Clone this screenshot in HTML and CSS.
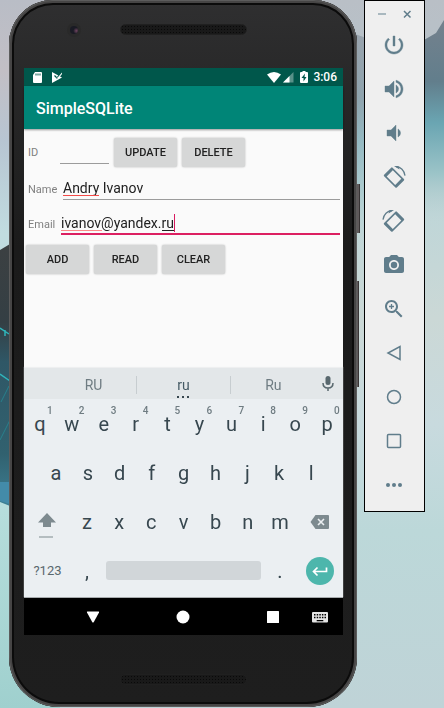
FILE: index.html
```html
<!DOCTYPE html>
<html lang="en">
<head>
<meta charset="utf-8">
<meta name="viewport" content="width=device-width, initial-scale=1">
<title>SimpleSQLite</title>
<link rel="stylesheet" href="styles.css">
</head>
<body>
<svg class="wallpaper" viewBox="0 0 444 708" preserveAspectRatio="none" aria-hidden="true">
  <defs>
    <linearGradient id="sky" x1="0" y1="0" x2="0" y2="1">
      <stop offset="0" stop-color="#b9bfc6"/><stop offset=".14" stop-color="#b5c3ca"/>
      <stop offset=".3" stop-color="#bfd6d8"/><stop offset=".45" stop-color="#cbd8d6"/>
      <stop offset=".6" stop-color="#c8dade"/><stop offset=".75" stop-color="#bcd8d9"/>
      <stop offset="1" stop-color="#bfd3d7"/>
    </linearGradient>
    <linearGradient id="ridge" x1="0" y1="0" x2="0" y2="1">
      <stop offset="0" stop-color="#74818d"/><stop offset=".3" stop-color="#627e8c"/>
      <stop offset=".5" stop-color="#6aa5b2"/><stop offset=".75" stop-color="#9cc4c8"/>
      <stop offset="1" stop-color="#c3d5d5" stop-opacity="0"/>
    </linearGradient>
    <linearGradient id="left" x1="0" y1="0" x2="0" y2="1">
      <stop offset="0" stop-color="#b9bdc6"/><stop offset=".1" stop-color="#c2bfc5"/>
      <stop offset=".2" stop-color="#b7c5d2"/><stop offset=".33" stop-color="#c1dce0"/>
      <stop offset=".7" stop-color="#b8dedd"/><stop offset="1" stop-color="#9fd0ce"/>
    </linearGradient>
    <linearGradient id="rock" x1="0" y1="0" x2="0" y2="1">
      <stop offset="0" stop-color="#3c4042"/><stop offset=".3" stop-color="#343f44"/>
      <stop offset=".45" stop-color="#2f5766"/><stop offset=".8" stop-color="#31616f"/>
      <stop offset="1" stop-color="#3d8095"/>
    </linearGradient>
  </defs>
  <rect width="444" height="708" fill="url(#sky)"/>
  <rect width="60" height="708" fill="url(#left)"/>
  <path d="M0 250 10 244V506L0 502z" fill="url(#rock)"/>
  <path d="M0 328 9 334M0 374 10 381M5 330v6" stroke="#2fb5bb" stroke-width="1.500"/>
  <path d="M1 402 9 386M0 440 10 420" stroke="#28808c"/>
  <path d="M0 482H10V504L0 501z" fill="#438ba9"/>
  <path d="M350 32 366 38V250H350z" fill="url(#ridge)" opacity=".45"/>
  <path d="M424 40 436 33 444 20V225H424z" fill="url(#ridge)"/>
</svg>

<main class="desktop">
  <section class="phone" aria-label="Phone">
    <span class="side-button side-button-power"></span>
    <span class="side-button side-button-volume"></span>
    <div class="bezel bezel-top">
      <span class="camera"></span>
      <span class="speaker"></span>
    </div>

    <div class="screen">
      <div class="status-bar">
        <svg class="status-icon" viewBox="0 0 12 12"><path fill-rule="evenodd" d="M4 1h6q1 0 1 1v9q0 1-1 1H3q-1 0-1-1V4zM4.500 2.500v2h1v-2zm2 0v2h1v-2zm2 0v2h1v-2z"/></svg>
        <svg class="status-icon" viewBox="0 0 12 12"><path d="M1 1 11 6.500 1 12z"/><path d="M3.500 4.500 6 7l4.500-5.500" fill="none" stroke="#00574b" stroke-width="1.200"/><path d="m5 5.500 1.500 1.200L11 1.500 11 3 7 8z" fill="#fff"/></svg>
        <span class="spacer"></span>
        <svg class="wifi" viewBox="0 0 14 12"><path d="M0 3.500Q7-1.500 14 3.500L7 12z"/></svg>
        <svg class="status-icon" viewBox="0 0 12 12"><path d="M11.500 1v10.500H1z" opacity=".35"/><path d="M7.500 5v6.500H1z"/></svg>
        <svg class="battery" viewBox="0 0 8 12"><path fill-rule="evenodd" d="M2.500 0h3v1H7q1 0 1 1v9q0 1-1 1H1q-1 0-1-1V2q0-1 1-1h1.500zM5 2.500 1.500 7h2v3.500L6.500 6h-2z"/></svg>
        <time class="clock">3:06</time>
      </div>
      <header class="app-bar"><h1 class="app-title">SimpleSQLite</h1></header>

      <form class="form">
        <div class="row row-id">
          <label class="label label-id" for="id">ID</label>
          <input class="input input-id" id="id" type="text">
          <button class="action" type="button">UPDATE</button>
          <button class="action" type="button">DELETE</button>
        </div>
        <div class="row row-name">
          <label class="label label-name" for="name">Name</label>
          <div class="field">
            <input class="input" id="name" type="text" value="Andry Ivanov" spellcheck="false">
            <span class="mark mark-name"></span>
          </div>
        </div>
        <div class="row">
          <label class="label label-email" for="email">Email</label>
          <div class="field">
            <input class="input input-active" id="email" type="text" value="ivanov@yandex.ru" spellcheck="false">
            <span class="mark mark-email"></span>
            <span class="mark mark-typing"></span>
            <span class="caret"></span>
          </div>
        </div>
        <div class="row row-actions">
          <button class="action" type="button">ADD</button>
          <button class="action" type="button">READ</button>
          <button class="action" type="button">CLEAR</button>
        </div>
      </form>

      <div class="keyboard">
        <div class="suggestions">
          <button class="suggestion" type="button">RU</button>
          <button class="suggestion suggestion-main" type="button">ru<span class="more"></span></button>
          <button class="suggestion" type="button">Ru</button>
          <button class="mic" type="button" aria-label="Voice input"><svg viewBox="0 0 16 18"><rect x="5.500" y="1" width="5" height="9" rx="2.500"/><path d="M3 8q0 5 5 5t5-5M8 13v3" fill="none" stroke="#59686e" stroke-width="1.500"/></svg></button>
        </div>
        <div class="keys">
          <button class="key" type="button">q<span class="digit">1</span></button>
          <button class="key" type="button">w<span class="digit">2</span></button>
          <button class="key" type="button">e<span class="digit">3</span></button>
          <button class="key" type="button">r<span class="digit">4</span></button>
          <button class="key" type="button">t<span class="digit">5</span></button>
          <button class="key" type="button">y<span class="digit">6</span></button>
          <button class="key" type="button">u<span class="digit">7</span></button>
          <button class="key" type="button">i<span class="digit">8</span></button>
          <button class="key" type="button">o<span class="digit">9</span></button>
          <button class="key" type="button">p<span class="digit">0</span></button>
        </div>
        <div class="keys keys-home">
          <button class="key" type="button">a</button>
          <button class="key" type="button">s</button>
          <button class="key" type="button">d</button>
          <button class="key" type="button">f</button>
          <button class="key" type="button">g</button>
          <button class="key" type="button">h</button>
          <button class="key" type="button">j</button>
          <button class="key" type="button">k</button>
          <button class="key" type="button">l</button>
        </div>
        <div class="keys">
          <button class="key key-wide" type="button" aria-label="Shift"><svg class="shift-icon" viewBox="0 0 20 26"><path d="M9 0 18 9.500H13V14H5V9.500H0z"/><path d="M1 23.500h14v1H1z"/></svg></button>
          <button class="key" type="button">z</button>
          <button class="key" type="button">x</button>
          <button class="key" type="button">c</button>
          <button class="key" type="button">v</button>
          <button class="key" type="button">b</button>
          <button class="key" type="button">n</button>
          <button class="key" type="button">m</button>
          <button class="key key-wide" type="button" aria-label="Backspace"><svg class="delete-icon" viewBox="0 0 20 14"><path d="M6.500 0H19q1 0 1 1v12q0 1-1 1H6.500L1.500 7z"/><path d="m9 4 6 6m0-6-6 6" stroke="#ebeff2" stroke-width="1.600"/></svg></button>
        </div>
        <div class="keys">
          <button class="key key-wide key-symbols" type="button">?123</button>
          <button class="key key-mark" type="button">,</button>
          <button class="space" type="button" aria-label="Space"></button>
          <button class="key key-mark" type="button">.</button>
          <button class="key key-wide" type="button" aria-label="Enter"><svg class="enter-icon" viewBox="0 0 28 28"><circle cx="14" cy="14" r="14"/><path d="M20.500 10.500v4H7.500m4-4-4 4 4 4" fill="none" stroke="#fff" stroke-width="1.700"/></svg></button>
        </div>
      </div>

      <nav class="nav-bar">
        <div class="nav-main">
          <button class="nav-button" type="button" aria-label="Back"><svg viewBox="0 0 24 24"><path d="M6.500 6.500h11q1 0 .5 1l-5.200 9.500q-.8 1.200-1.600 0L6 7.500q-.5-1 .5-1z"/></svg></button>
          <button class="nav-button" type="button" aria-label="Home"><svg viewBox="0 0 24 24"><circle cx="12" cy="12" r="6.500"/></svg></button>
          <button class="nav-button" type="button" aria-label="Overview"><svg viewBox="0 0 24 24"><rect x="6" y="6" width="12" height="12" rx=".5"/></svg></button>
        </div>
        <button class="nav-button nav-keyboard" type="button" aria-label="Keyboard"><svg viewBox="0 0 24 24"><path fill-rule="evenodd" d="M5 7h14q1 0 1 1v8.500q0 1-1 1H5q-1 0-1-1V8q0-1 1-1zM6 9v1.500h1.500V9zm2.700 0v1.500h1.500V9zm2.600 0v1.500h1.500V9zm2.600 0v1.500h1.500V9zm2.600 0v1.500H18V9zM6 11.700v1.500h1.500v-1.500zm2.700 0v1.500h1.500v-1.500zm2.600 0v1.500h1.500v-1.500zm2.600 0v1.500h1.500v-1.500zm2.600 0v1.500H18v-1.500zM8.700 15v1.300h6.600V15z"/></svg></button>
      </nav>
    </div>

    <div class="bezel bezel-bottom"><span class="speaker"></span></div>
  </section>

  <aside class="rail" aria-label="Emulator controls">
    <div class="rail-window">
      <button class="window-button" type="button" aria-label="Minimize"><svg viewBox="0 0 10 10"><path d="M1 5h8" stroke="#92a6af" stroke-width="1.500"/></svg></button>
      <button class="window-button" type="button" aria-label="Close"><svg viewBox="0 0 10 10"><path d="m2 2 6.500 6.500m0-6.500L2 8.500" stroke="#607d8b" stroke-width="1.500"/></svg></button>
    </div>
    <button class="tool" type="button" aria-label="Power"><svg viewBox="0 0 24 24"><path d="M13 3h-2v10h2V3zm4.830 2.170-1.420 1.420C17.990 7.860 19 9.810 19 12c0 3.870-3.130 7-7 7s-7-3.130-7-7c0-2.190 1.010-4.140 2.580-5.420L6.170 5.170C4.230 6.820 3 9.260 3 12c0 4.970 4.030 9 9 9s9-4.030 9-9c0-2.740-1.230-5.180-3.170-6.830z" stroke="#607d8b" stroke-width=".4"/></svg></button>
    <button class="tool" type="button" aria-label="Volume up"><svg viewBox="0 0 24 24"><path d="M3 9v6h4l5 5V4L7 9H3zm13.500 3c0-1.770-1.020-3.290-2.500-4.030v8.050c1.480-.73 2.500-2.250 2.500-4.020zM14 3.230v2.060c2.890.86 5 3.540 5 6.710s-2.110 5.850-5 6.710v2.060c4.010-.91 7-4.490 7-8.770s-2.990-7.860-7-8.770z" stroke="#607d8b" stroke-width=".4"/></svg></button>
    <button class="tool" type="button" aria-label="Volume down"><svg viewBox="0 0 24 24"><path d="M18.500 12c0-1.770-1.020-3.290-2.500-4.030v8.050c1.480-.73 2.500-2.250 2.500-4.020zM5 9v6h4l5 5V4L9 9H5z" stroke="#607d8b" stroke-width=".4"/></svg></button>
    <button class="tool" type="button" aria-label="Rotate left"><svg viewBox="0 0 24 24"><path transform="translate(12 12.600) rotate(45)" fill-rule="evenodd" d="M-8-6H8q1 0 1 1V5q0 1-1 1H-8q-1 0-1-1V-5q0-1 1-1zM-6-4.300V4.300H6V-4.300z"/><path d="M14 1.700q7.500.6 9 9" fill="none" stroke="#607d8b" stroke-width="1.300"/><path d="M12 .9 16.500 1l1 3.500z"/></svg></button>
    <button class="tool" type="button" aria-label="Rotate right"><svg viewBox="0 0 24 24"><g transform="matrix(-1 0 0 1 24 0)"><path transform="translate(12 12.600) rotate(45)" fill-rule="evenodd" d="M-8-6H8q1 0 1 1V5q0 1-1 1H-8q-1 0-1-1V-5q0-1 1-1zM-6-4.300V4.300H6V-4.300z"/><path d="M14 1.700q7.500.6 9 9" fill="none" stroke="#607d8b" stroke-width="1.300"/><path d="M12 .9 16.500 1l1 3.500z"/></g></svg></button>
    <button class="tool" type="button" aria-label="Take screenshot"><svg viewBox="0 0 24 24"><circle cx="12" cy="12" r="3.200"/><path d="M9 2 7.170 4H4c-1.100 0-2 .9-2 2v12c0 1.100.9 2 2 2h16c1.100 0 2-.9 2-2V6c0-1.100-.9-2-2-2h-3.170L15 2H9zm3 15c-2.760 0-5-2.240-5-5s2.240-5 5-5 5 2.240 5 5-2.240 5-5 5z"/></svg></button>
    <button class="tool" type="button" aria-label="Zoom"><svg viewBox="0 0 24 24"><path d="M15.500 14h-.79l-.28-.27C15.410 12.590 16 11.110 16 9.500 16 5.910 13.090 3 9.500 3S3 5.910 3 9.500 5.910 16 9.500 16c1.610 0 3.090-.59 4.230-1.570l.27.280v.79l5 4.990L20.490 19l-4.990-5zm-6 0C7.010 14 5 11.990 5 9.500S7.010 5 9.500 5 14 7.010 14 9.500 11.990 14 9.500 14z"/><path d="M9.500 7v5M7 9.500h5" stroke="#607d8b" stroke-width="1.300"/></svg></button>
    <button class="tool" type="button" aria-label="Back"><svg class="outline" viewBox="0 0 24 24"><path d="M18 5.500v13L6 12z"/></svg></button>
    <button class="tool" type="button" aria-label="Home"><svg class="outline" viewBox="0 0 24 24"><circle cx="12" cy="12" r="6.500"/></svg></button>
    <button class="tool" type="button" aria-label="Overview"><svg class="outline" viewBox="0 0 24 24"><rect x="5.500" y="5.500" width="13" height="13" rx="1"/></svg></button>
    <button class="tool" type="button" aria-label="More"><svg viewBox="0 0 24 24"><circle cx="6" cy="12" r="2"/><circle cx="12" cy="12" r="2"/><circle cx="18" cy="12" r="2"/></svg></button>
  </aside>
</main>
</body>
</html>
```

FILE: styles.css
```css
* {
  box-sizing: border-box;
}

body {
  margin: 0;
  min-height: 100vh;
  background: #bfd3d7;
  font-family: Roboto, "Liberation Sans", sans-serif;
}

button {
  padding: 0;
  border: 0;
  background: none;
  font-family: inherit;
}

svg {
  display: block;
}

.wallpaper {
  position: fixed;
  inset: 0;
  width: 100%;
  height: 100%;
}

.desktop {
  position: relative;
  display: flex;
  align-items: flex-start;
  gap: 7px;
  padding: 0 19px 0 9px;
}

/* Phone body */
.phone {
  position: relative;
  flex: 1;
  min-width: 0;
  padding: 0 14px 0 15px;
  border-radius: 44px 44px 50px 50px;
  background: linear-gradient(#2f2f30, #1b1b1b 35%, #1e1e1e);
  box-shadow: inset 0 0 0 1px #5c5c5c, inset 0 0 0 3px #464545, inset 0 0 0 5px #0b0b0b;
}

.side-button {
  position: absolute;
  left: 100%;
  width: 3px;
  background: #5e595a;
  border-right: 1px solid #393536;
}

.side-button-power {
  top: 184px;
  height: 49px;
}

.side-button-volume {
  top: 281px;
  width: 2px;
  height: 106px;
}

.bezel {
  display: flex;
  justify-content: center;
}

.bezel-top {
  position: relative;
  height: 68px;
  padding-top: 24px;
}

.bezel-bottom {
  height: 72px;
  padding-top: 39px;
}

.camera {
  position: absolute;
  top: 23px;
  left: 43px;
  width: 14px;
  height: 14px;
  border: 3px solid #292929;
  border-radius: 50%;
  background: radial-gradient(circle at 80% 60%, #6f4560, #191a24 40%);
}

.speaker {
  width: 127px;
  height: 11px;
  border: 1px solid #202020;
  border-radius: 6px;
  background: radial-gradient(circle, #090909 1px, #191919 1px) 0 0 / 3px 3px;
}

.screen {
  background: #fafafa;
}

/* App */
.status-bar {
  display: flex;
  align-items: center;
  gap: 4px;
  height: 18px;
  padding: 0 6px 0 7px;
  background: #00574b;
  color: #fff;
  fill: #fff;
}

.status-icon {
  width: 12px;
  height: 12px;
}

.status-icon + .status-icon {
  margin-left: 4px;
}

.spacer {
  flex: 1;
}

.wifi {
  width: 14px;
  height: 12px;
}

.wifi + .status-icon {
  margin-left: -3px;
}

.battery {
  width: 8px;
  height: 12px;
  margin: 0 1px 0 2px;
}

.clock {
  font-size: 12px;
  font-weight: 500;
}

.app-bar {
  display: flex;
  align-items: center;
  height: 43px;
  padding: 2px 12px 0;
  background: #008577;
  box-shadow: 0 1px 2px rgba(0, 0, 0, 0.4);
}

.app-title {
  margin: 0;
  color: #fff;
  font-size: 16px;
  font-weight: 500;
}

.form {
  min-height: 239px;
  padding: 9px 3px 0 2px;
}

.row {
  display: flex;
  align-items: flex-end;
  height: 35px;
}

.row-id {
  align-items: center;
  gap: 5px;
  height: 29px;
}

.row-name {
  height: 33px;
}

.row-actions {
  gap: 5px;
  height: 39px;
}

.label {
  padding: 0 0 3px 2px;
  color: #808080;
  font-size: 11px;
  line-height: 14px;
}

.label-id {
  width: 29px;
  padding-bottom: 0;
}

.label-name {
  width: 37px;
}

.label-email {
  width: 35px;
}

.field {
  position: relative;
  flex: 1;
}

.input {
  display: block;
  width: 100%;
  height: 22px;
  padding: 0 0 1px;
  border: 0;
  border-bottom: 1px solid #9b9b9b;
  outline: 0;
  background: none;
  color: #212121;
  font-family: inherit;
  font-size: 14px;
}

.input-id {
  width: 49px;
}

.input-active {
  border-bottom: 2px solid #dc1f61;
}

.mark {
  position: absolute;
  bottom: 4px;
  left: 0;
  height: 1px;
  background: #f44b48;
}

.mark-name {
  width: 36px;
}

.mark-email {
  width: 41px;
  background: #fa8a88;
}

.mark-typing {
  left: 101px;
  width: 12px;
  background: #212121;
}

.caret {
  position: absolute;
  bottom: 3px;
  left: 113px;
  width: 1px;
  height: 18px;
  background: #d81b60;
}

.action {
  width: 63px;
  height: 29px;
  border-radius: 2px;
  background: #d6d7d7;
  box-shadow: 0 0 2px rgba(0, 0, 0, 0.3);
  color: #212121;
  font-size: 11px;
  font-weight: 500;
}

/* Keyboard */
.keyboard {
  padding-bottom: 2px;
  border-bottom: 1px solid #a7abad;
  background: #ebeff2;
  box-shadow: 0 -1px 1px #eeeff0;
}

.suggestions {
  display: flex;
  align-items: center;
  height: 31px;
  padding-left: 27px;
  background: #e3e7e9;
}

.suggestion {
  position: relative;
  flex: 9;
  height: 31px;
  padding-top: 2px;
  color: #6f7c82;
  font-size: 14px;
}

.suggestion-main {
  flex: 10;
  color: #455a64;
}

.suggestion-main::before,
.suggestion-main::after {
  content: "";
  position: absolute;
  top: 8px;
  left: 0;
  width: 1px;
  height: 18px;
  background: #c7cdd0;
}

.suggestion-main::after {
  right: 0;
  left: auto;
}

.more {
  position: absolute;
  bottom: 1px;
  left: 50%;
  width: 12px;
  height: 2px;
  margin-left: -6px;
  background: repeating-linear-gradient(90deg, #37474f 0 2px, transparent 2px 5px);
}

.mic {
  width: 16px;
  margin: 0 7px 0 4px;
  fill: #59686e;
}

.keys {
  display: flex;
  align-items: center;
  height: 49px;
}

.keys-home {
  padding: 0 16px;
}

.key {
  position: relative;
  display: flex;
  flex: 1;
  align-items: center;
  justify-content: center;
  height: 49px;
  color: #37474f;
  font-size: 20px;
}

.key-wide {
  flex: 0 0 47px;
}

.key-mark {
  flex: 0 0 32px;
}

.key-symbols {
  color: #59686e;
  font-size: 13px;
}

.digit {
  position: absolute;
  top: 6px;
  left: 50%;
  margin-left: 7px;
  color: #6f7c82;
  font-size: 10px;
  font-weight: 500;
  line-height: 12px;
}

.shift-icon {
  width: 20px;
  height: 26px;
  margin-top: 8px;
  fill: #7d8a8f;
}

.delete-icon {
  width: 20px;
  height: 14px;
  fill: #7d8a8f;
}

.space {
  flex: 1;
  height: 19px;
  margin: 0 3px;
  border-radius: 3px;
  background: #d1d6d9;
}

.enter-icon {
  width: 28px;
  height: 28px;
  fill: #4db6ac;
}

/* System navigation */
.nav-bar {
  display: flex;
  align-items: center;
  height: 37px;
  padding: 0 11px 0 57px;
  background: #000;
}

.nav-main {
  display: flex;
  flex: 1;
  justify-content: space-between;
}

.nav-button {
  width: 24px;
  height: 24px;
  fill: #fff;
}

.nav-keyboard {
  margin-left: 23px;
  fill: #e4e4e4;
}

/* Emulator toolbar */
.rail {
  display: flex;
  flex: 0 0 61px;
  flex-direction: column;
  align-items: center;
  padding: 0 1px 4px 0;
  border: 1px solid #000;
  background: #efefef;
}

.rail-window {
  display: flex;
  gap: 15px;
  align-items: flex-end;
  height: 22px;
  padding-bottom: 4px;
}

.window-button {
  width: 10px;
  height: 10px;
}

.tool {
  display: flex;
  align-items: center;
  justify-content: center;
  width: 44px;
  height: 44px;
  fill: #607d8b;
}

.tool svg {
  width: 24px;
  height: 24px;
}

.tool .outline {
  fill: none;
  stroke: #607d8b;
  stroke-width: 1.5px;
}
```
